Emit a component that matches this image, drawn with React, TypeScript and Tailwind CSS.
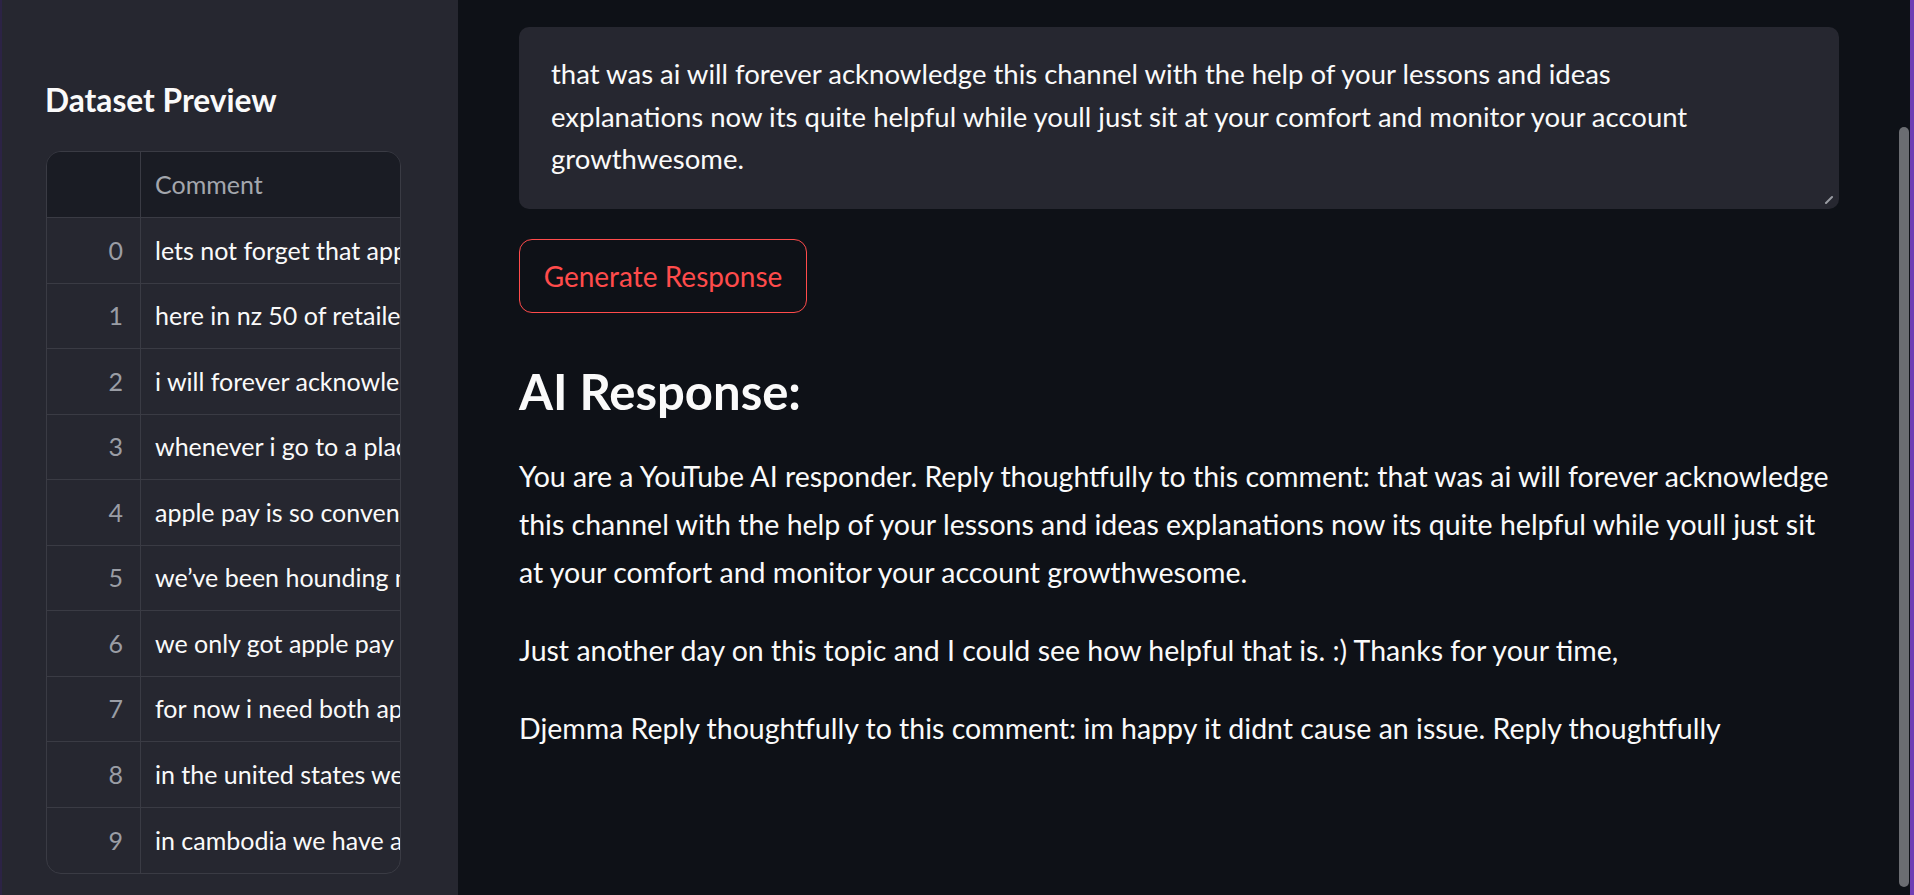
import React from 'react';

const rows = [
  'lets not forget that apple pay in 2014 required a brand new iphone',
  'here in nz 50 of retailers dont even have contactless credit card machines',
  'i will forever acknowledge this channel with the help of your lessons',
  'whenever i go to a place that doesnt take apple pay',
  'apple pay is so convenient secure and easy to use',
  'we’ve been hounding my bank to adopt apple pay',
  'we only got apple pay in south africa in 2019',
  'for now i need both apple pay and google pay',
  'in the united states we have an abundance of retailers',
  'in cambodia we have a lot of places that use qr codes',
];

const comment =
  'that was ai will forever acknowledge this channel with the help of your lessons and ideas explanations now its quite helpful while youll just sit at your comfort and monitor your account growthwesome.';

const font = { fontFamily: 'Lato, "Noto Sans", sans-serif' };

const DataTable = () => (
  <div className="w-[355px] overflow-hidden rounded-[15px] border border-[#3a3b44] bg-[#262730]">
    <div className="flex h-[66px] border-b border-[#3a3b44] bg-[#1a1c24]">
      <div className="w-[94px] shrink-0 border-r border-[#3a3b44]" />
      <div className="flex items-center whitespace-nowrap pl-[14px] text-[25px] text-[#a3a6ad]">Comment</div>
    </div>
    {rows.map((text, i) => (
      <div
        key={i}
        className={`flex h-[65.5px] ${i !== rows.length - 1 ? 'border-b border-[#3a3b44]' : ''}`}
      >
        <div className="flex w-[94px] shrink-0 items-center justify-end border-r border-[#3a3b44] pr-[17px] text-[25px] text-[#9a9da5]">
          {i}
        </div>
        <div className="flex min-w-0 flex-1 items-center overflow-hidden whitespace-nowrap pl-[14px] text-[25px] text-[#fafafa]">
          {text}
        </div>
      </div>
    ))}
  </div>
);

export default function App() {
  return (
    <div className="flex h-[895px] w-[1914px] overflow-hidden bg-[#0e1117]" style={font}>
      {/* sidebar */}
      <div className="h-full w-[458px] shrink-0 border-l-2 border-[#2c2345] bg-[#262730] pl-[43px] pt-[81px]">
        <h3 className="h-[38px] text-[31.7px] font-bold leading-[38px] text-[#fafafa]">Dataset Preview</h3>
        <div className="mt-[32px] pl-[1px]">
          <DataTable />
        </div>
      </div>

      {/* main */}
      <div className="relative h-full flex-1">
        <div className="w-[1382px] pl-[61px] pt-[27px]">
          <div className="relative h-[182px] w-[1320px] rounded-[10px] bg-[#262730] pl-[32px] pr-[80px] pt-[26px] text-[27.5px] leading-[42.5px] text-[#fafafa]">
            {comment}
            <svg className="absolute bottom-[5px] right-[5px]" width="10" height="10" viewBox="0 0 10 10">
              <line x1="2" y1="9" x2="8" y2="3" stroke="#9a9ca3" strokeWidth="2" strokeLinecap="round" />
            </svg>
          </div>

          <button className="mt-[30px] flex h-[74px] w-[288px] items-center justify-center rounded-[13px] border border-[#ff4b4b] text-[28px] text-[#ff4b4b]">
            Generate Response
          </button>

          <h3 className="mt-[49px] text-[49px] font-bold leading-[1.2] text-[#fafafa]">AI Response:</h3>

          <div className="mt-[31px] w-[1322px] text-[28.5px] leading-[48px] text-[#fafafa]">
            <p className="mb-[30px]">
              You are a YouTube AI responder. Reply thoughtfully to this comment: {comment}
            </p>
            <p className="mb-[30px]">
              Just another day on this topic and I could see how helpful that is. :) Thanks for your time,
            </p>
            <p>
              Djemma Reply thoughtfully to this comment: im happy it didnt cause an issue. Reply thoughtfully
            </p>
          </div>
        </div>

        {/* scrollbar thumb */}
        <div className="absolute right-[1px] top-[127px] h-[760px] w-[10px] rounded-full bg-[#6b6d72]" />
      </div>

      <div className="h-full w-[4px] shrink-0 bg-[#6e3db4]" />
    </div>
  );
}
